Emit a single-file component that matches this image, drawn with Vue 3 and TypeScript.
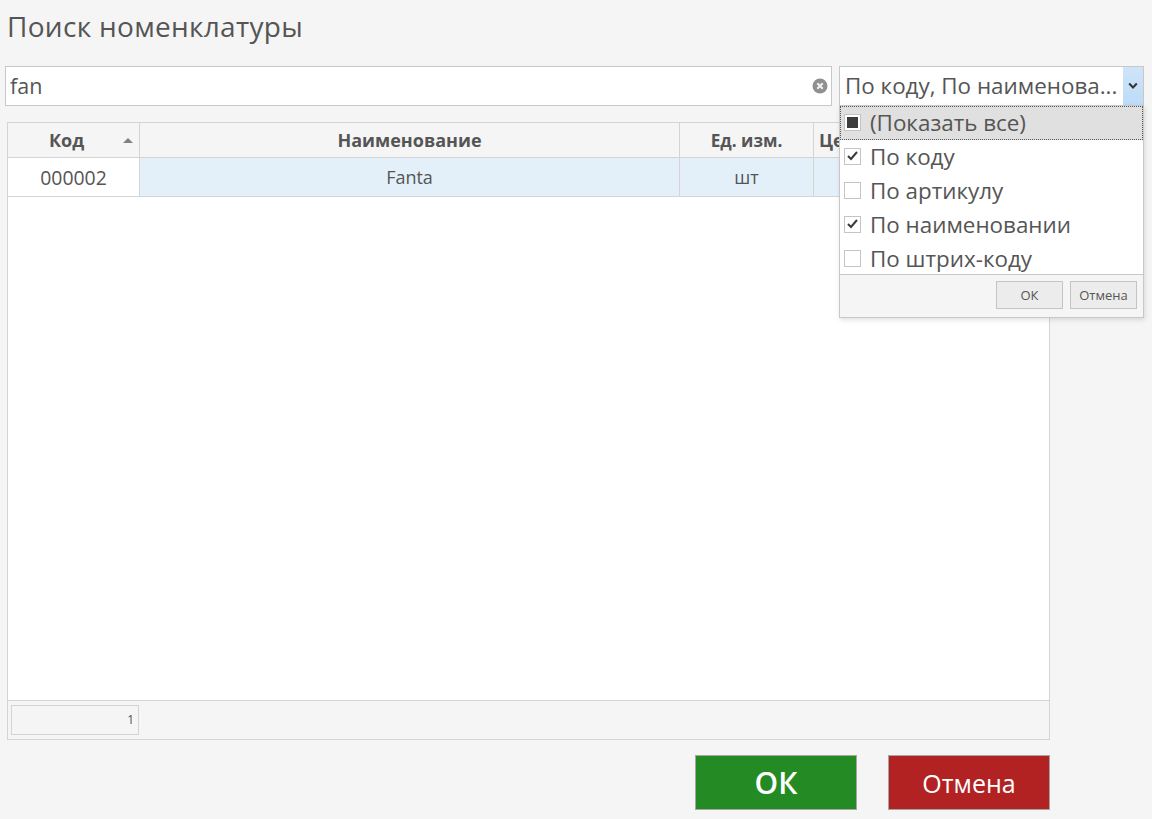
<script setup lang="ts">
interface Opt { label: string; state: 'mixed' | 'on' | 'off' }
const options: Opt[] = [
  { label: '(Показать все)', state: 'mixed' },
  { label: 'По коду', state: 'on' },
  { label: 'По артикулу', state: 'off' },
  { label: 'По наименовании', state: 'on' },
  { label: 'По штрих-коду', state: 'off' },
]
</script>

<template>
  <div class="page">
    <h1 class="title">Поиск номенклатуры</h1>
    <div class="filters">
      <div class="search">
        <span class="search-text">fan</span>
        <svg class="clear" width="16" height="16" viewBox="0 0 16 16">
          <circle cx="8" cy="8" r="7.5" fill="#8f8f8f" />
          <path d="M5.3 5.3l5.4 5.4M10.7 5.3l-5.4 5.4" stroke="#f2f2f2" stroke-width="2" fill="none" />
        </svg>
      </div>
      <div class="combo-wrap">
        <div class="combo">
          <span class="combo-text">По коду, По наименова...</span>
          <span class="combo-btn">
            <svg width="10" height="8" viewBox="0 0 10 8">
              <path d="M1.2 1.5L5 5.5l3.8-4" stroke="#333" stroke-width="2" fill="none" />
            </svg>
          </span>
        </div>
        <div class="menu">
          <div class="menu-list">
            <div v-for="(o, i) in options" :key="o.label" class="opt" :class="{ focused: i === 0 }">
              <span class="box">
                <span v-if="o.state === 'mixed'" class="mixed"></span>
                <svg v-if="o.state === 'on'" width="11" height="10" viewBox="0 0 11 10">
                  <path d="M1 5l3 3 6-7" stroke="#3a3a3a" stroke-width="2" fill="none" />
                </svg>
              </span>
              <span>{{ o.label }}</span>
            </div>
          </div>
          <div class="menu-foot">
            <button class="mini">ОК</button>
            <button class="mini">Отмена</button>
          </div>
        </div>
      </div>
    </div>

    <div class="grid">
      <div class="row head">
        <div class="cell c1">Код<span class="sort"></span></div>
        <div class="cell c2">Наименование</div>
        <div class="cell c3">Ед. изм.</div>
        <div class="cell c4 left">Цена</div>
      </div>
      <div class="row body-row">
        <div class="cell c1 code">000002</div>
        <div class="cell c2 sel">Fanta</div>
        <div class="cell c3 sel">шт</div>
        <div class="cell c4 sel"></div>
      </div>
      <div class="spacer"></div>
      <div class="grid-foot"><div class="count">1</div></div>
    </div>

    <div class="actions">
      <button class="act green">ОК</button>
      <button class="act red">Отмена</button>
    </div>
  </div>
</template>

<style scoped>
.page {
  box-sizing: border-box;
  width: 1152px;
  height: 819px;
  background: #f5f5f5;
  padding: 8px 0 0 5px;
  font-family: "Open Sans", "Noto Sans", sans-serif;
  color: #555;
  overflow: hidden;
}
.title {
  margin: 0 0 0 2px;
  font-size: 28px;
  line-height: 36px;
  letter-spacing: 0.3px;
  font-weight: 400;
  color: #555;
}
.filters {
  display: flex;
  gap: 7px;
  margin-top: 22px;
  height: 40px;
}
.search {
  box-sizing: border-box;
  width: 827px;
  height: 40px;
  background: #fff;
  border: 1px solid #c8c8c8;
  display: flex;
  align-items: center;
  justify-content: space-between;
  padding: 0 3px 0 4px;
  font-size: 21.5px;
}
.search-text { margin-top: -2px; }
.clear { flex: none; }
.combo-wrap {
  position: relative;
  width: 305px;
  z-index: 2;
}
.combo {
  box-sizing: border-box;
  height: 40px;
  background: #fff;
  border: 1px solid #c8c8c8;
  display: flex;
  align-items: center;
  padding-left: 5px;
  font-size: 22.4px;
  white-space: nowrap;
}
.combo-text { flex: 1; overflow: hidden; margin-top: -2px; }
.combo-btn {
  flex: none;
  width: 20px;
  height: 38px;
  background: linear-gradient(#cfe4f7, #bcdcf8);
  display: flex;
  align-items: center;
  justify-content: center;
}
.menu {
  position: absolute;
  left: 0;
  top: 39px;
  width: 305px;
  height: 213px;
  box-sizing: border-box;
  background: #fff;
  border: 1px solid #c8c8c8;
  box-shadow: 1px 2px 5px rgba(0, 0, 0, 0.12);
  display: flex;
  flex-direction: column;
}
.menu-list { height: 168px; }
.opt {
  box-sizing: border-box;
  height: 34px;
  display: flex;
  align-items: center;
  gap: 9px;
  padding: 0 0 2px 4px;
  font-size: 22.4px;
  white-space: nowrap;
}
.opt.focused {
  background: #e0e0e0;
  outline: 1px dotted #555;
  outline-offset: -1px;
}
.box {
  box-sizing: border-box;
  width: 17px;
  height: 17px;
  background: #fff;
  border: 1px solid #c4c4c4;
  display: flex;
  align-items: center;
  justify-content: center;
}
.mixed {
  width: 11px;
  height: 11px;
  background: #3c3c3c;
}
.menu-foot {
  flex: 1;
  background: #f5f5f5;
  border-top: 1px solid #c8c8c8;
  display: flex;
  justify-content: flex-end;
  align-items: flex-start;
  gap: 7px;
  padding: 6px 6px 0 0;
}
.mini {
  box-sizing: border-box;
  width: 67px;
  height: 28px;
  background: #ececec;
  border: 1px solid #c4c4c4;
  color: #555;
  font-family: inherit;
  font-size: 13px;
  padding: 0;
}
.grid {
  box-sizing: border-box;
  width: 1043px;
  height: 618px;
  margin: 16px 0 0 2px;
  border: 1px solid #d4d4d4;
  background: #fff;
  display: flex;
  flex-direction: column;
}
.row {
  display: grid;
  grid-template-columns: 132px 540px 134px 1fr;
}
.head {
  height: 35px;
  background: #f5f5f5;
  border-bottom: 1px solid #d4d4d4;
  font-weight: 700;
  font-size: 18px;
  box-sizing: border-box;
}
.head .c3 { font-size: 17.2px; }
.body-row {
  height: 39px;
  box-sizing: border-box;
  border-bottom: 1px solid #d4d4d4;
  font-size: 18px;
}
.cell {
  box-sizing: border-box;
  border-right: 1px solid #d4d4d4;
  display: flex;
  align-items: center;
  justify-content: center;
  position: relative;
  white-space: nowrap;
}
.head .c1 { padding-right: 14px; }
.cell.code { font-size: 19.4px; }
.cell.c4 { border-right: 0; }
.cell.left { justify-content: flex-start; padding-left: 5px; }
.sel { background: #e3f0fa; }
.sort {
  position: absolute;
  right: 6px;
  top: 15px;
  width: 0;
  height: 0;
  border-left: 5px solid transparent;
  border-right: 5px solid transparent;
  border-bottom: 5px solid #808080;
}
.spacer { flex: 1; }
.grid-foot {
  box-sizing: border-box;
  height: 39px;
  background: #f5f5f5;
  border-top: 1px solid #d4d4d4;
  padding: 4px 0 0 3px;
}
.count {
  box-sizing: border-box;
  width: 128px;
  height: 30px;
  border: 1px solid #d4d4d4;
  text-align: right;
  padding-right: 4px;
  font-size: 12px;
  line-height: 28px;
}
.actions {
  display: flex;
  justify-content: flex-end;
  gap: 31px;
  width: 1045px;
  margin-top: 15px;
}
.act {
  box-sizing: border-box;
  width: 162px;
  height: 55px;
  border: 1px solid #a5a5a5;
  color: #fff;
  font-family: inherit;
  padding: 0;
}
.green {
  background: #248a24;
  font-size: 30px;
  font-weight: 600;
}
.red {
  background: #b22222;
  font-size: 25px;
}
</style>
